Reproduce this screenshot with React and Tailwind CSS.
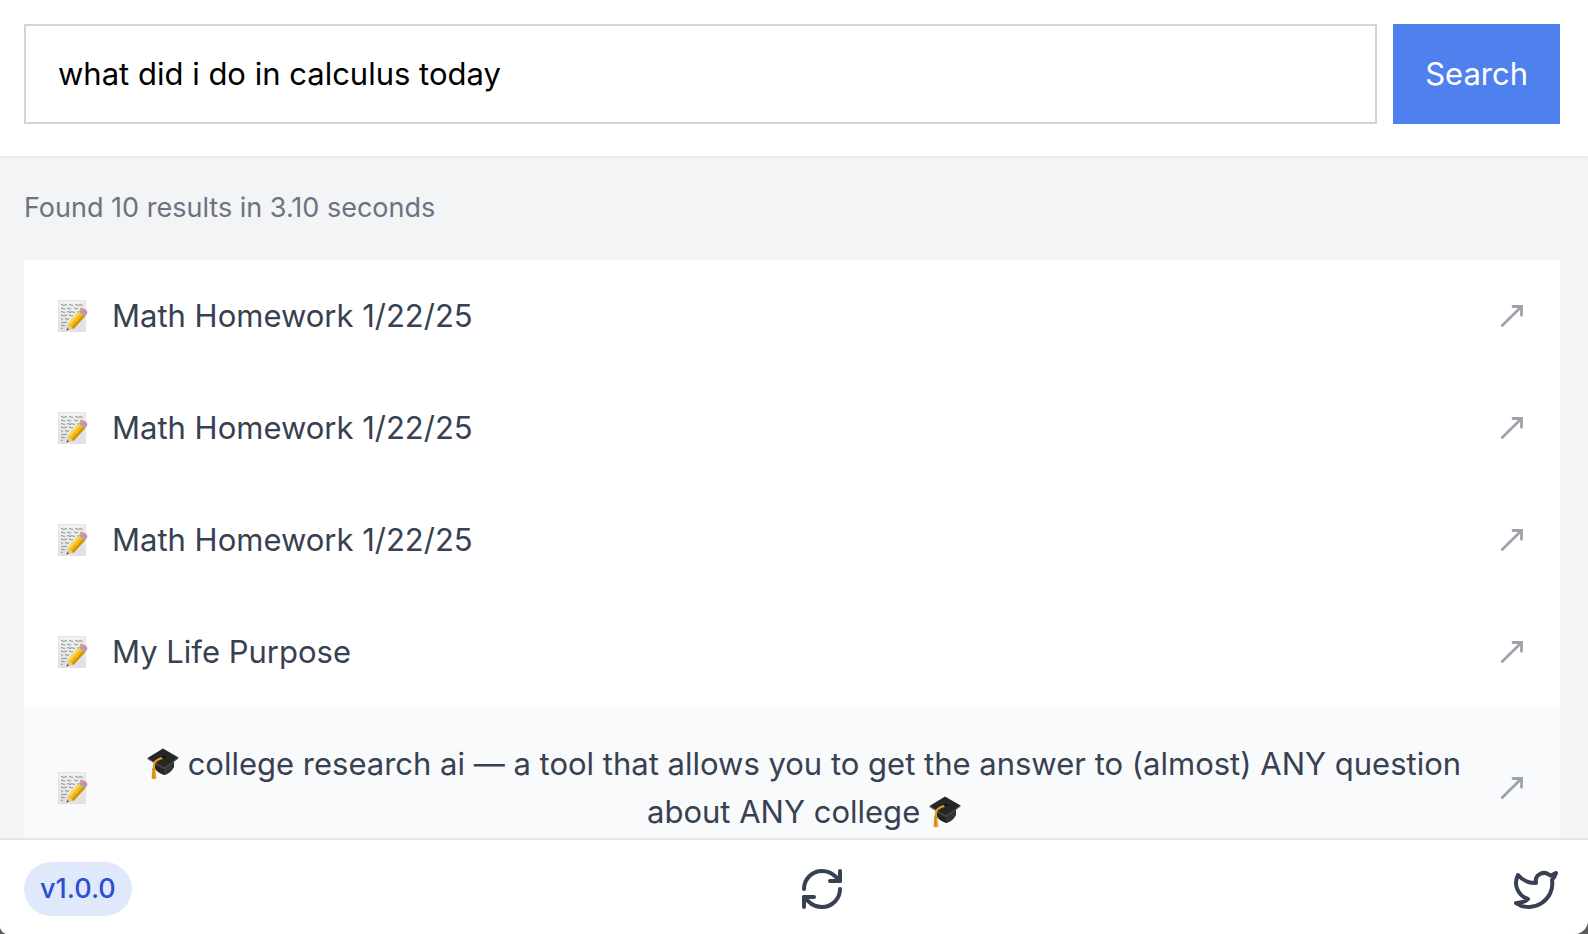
import React from 'react';
import { RefreshCw, Twitter } from 'lucide-react';

const results = [
  { id: 1, title: 'Math Homework 1/22/25' },
  { id: 2, title: 'Math Homework 1/22/25' },
  { id: 3, title: 'Math Homework 1/22/25' },
  { id: 4, title: 'My Life Purpose' },
  {
    id: 5,
    title: 'college research ai — a tool that allows you to get the answer to (almost) ANY question about ANY college',
    cap: true,
    active: true
  }
];

const MemoIcon = () => (
  <svg className="w-8 h-8 shrink-0" viewBox="0 0 32 32" fill="none" aria-hidden="true">
    <defs>
      <linearGradient id="paper" x1="0" y1="0" x2="0" y2="1">
        <stop offset="0" stopColor="#f1f1f1" />
        <stop offset="1" stopColor="#e0e0e0" />
      </linearGradient>
    </defs>
    <rect x="2.5" y="0.5" width="27" height="31" fill="url(#paper)" stroke="#dadada" strokeWidth="0.6" />
    <g stroke="#8f8f93" strokeWidth="1">
      <path d="M5 5q1-1 2 0t2 0 2 0M13 5q1-1 2 0t2 0M19 5q1-1 2 0t2 0 2 0 2 0" />
      <path d="M5 8.500q1-1 2 0t2 0M11 8.500q1-1 2 0t2 0M18 8.500q1-1 2 0t2 0M24 8.500h2" />
      <path d="M5 12q1-1 2 0t2 0M11 12q1-1 2 0t2 0 2 0 2 0M21 12h2" />
      <path d="M5 15.500q1-1 2 0t2 0 2 0M13 15.500q1-1 2 0t2 0" />
      <path d="M5 19h2M9 19q1-1 2 0t2 0" />
      <path d="M5 22.500q1-1 2 0t2 0 2 0M5 25.500q1-1 2 0t2 0M5 28.500q1-1 2 0" />
    </g>
    <path d="M10.500 30.500 12 23.500 17.500 28.800Z" fill="#e9c58c" />
    <path d="m10.500 30.500.6-2.600 1.800 1.700Z" fill="#4a4038" />
    <path d="M11.800 24 23 11.500 28.800 16.700 17.500 29Z" fill="#f4b916" />
    <path d="M11.800 24 23 11.500 24.700 13 13.500 25.600Z" fill="#fbd84a" />
    <path d="M15.700 27.300 27 15 28.800 16.700 17.500 29Z" fill="#d39112" />
    <path d="m22.900 11.600 2-2.200 5.700 5.100-1.900 2.200Z" fill="#9aa5ac" />
    <path d="M24.900 9.400c1.300-1.300 3.400-1 5 .4s2 3.400.7 4.700Z" fill="#ea7f8c" />
  </svg>
);

const CapIcon = () => (
  <svg
    className="inline-block w-8 h-8 align-[-5px]"
    viewBox="0 0 32 32"
    fill="none"
    role="img"
    aria-label="graduation cap"
  >
    <path d="M8 14v7c2 3 6 5 9 6 4-1 8-4 10-8v-6Z" fill="#242424" />
    <path d="M17 20.500v6.500c4-1 8-4 9.500-8v-4.500Z" fill="#343434" />
    <path d="M16 .5 31.500 9.500 17 20.500.500 10Z" fill="#262626" />
    <path d="M.5 10 17 19.400 31.500 9.500v1L17 21.300.500 11Z" fill="#4d4d4d" />
    <path d="M16.500 9.500C13 10.500 9.500 12 7.500 14.500L6.600 21" stroke="#e29a20" strokeWidth="2.200" strokeLinecap="round" />
    <ellipse cx="16.800" cy="9.300" rx="2.200" ry="1.400" fill="#111" />
    <path d="M5.400 20h2.800l1.300 10.500c-1.200 1-4 1-5 0Z" fill="#e8a02a" />
    <path d="M6.500 22.500 6 30.500M5.200 21.500h3.200" stroke="#b97412" strokeWidth="0.800" />
  </svg>
);

const ArrowIcon = () => (
  <svg className="w-8 h-8 shrink-0 text-[#9ca3af]" viewBox="0 0 32 32" fill="none" stroke="currentColor" strokeWidth="2.800" aria-hidden="true">
    <path d="M6.300 25.500 25 7" strokeLinecap="round" />
    <path d="M17 6.500h8.500v8.800" strokeLinecap="round" />
  </svg>
);

const App = () => {
  return (
    <div className="h-screen bg-[#5c5c5c]">
      <div className="flex flex-col h-full overflow-hidden rounded-bl-[8px] rounded-br-[14px] bg-[#f3f4f6] font-['Inter',sans-serif]">
        <header className="relative bg-white pt-6 pb-8 pl-6 pr-7 shadow-[0_2px_4px_rgba(0,0,0,0.05)]">
          <form className="flex gap-4" onSubmit={(e) => e.preventDefault()}>
            <input
              type="text"
              aria-label="Search"
              defaultValue="what did i do in calculus today"
              className="flex-1 min-w-0 px-8 py-6 border-2 border-[#d1d5db] bg-white text-[31px] leading-[48px] text-black outline-none"
            />
            <button type="submit" className="px-8 bg-[#4f81ee] text-[31px] leading-[48px] text-white">
              Search
            </button>
          </form>
        </header>

        <main className="flex-1 min-h-0 overflow-hidden pt-8 pl-6 pr-7">
          <p className="mb-8 text-[27px] leading-10 text-[#6b7280]">Found 10 results in 3.10 seconds</p>
          <ul className="bg-white">
            {results.map((result) => (
              <li key={result.id}>
                <button
                  type="button"
                  className={`flex items-center w-full px-8 py-8 text-[31px] leading-[48px] text-[#374151] ${
                    result.active ? 'bg-[#f9fafb] text-center' : 'text-left'
                  }`}
                >
                  <MemoIcon />
                  <span className="flex-1 ml-6">
                    {result.cap && <><CapIcon />{' '}</>}
                    {result.title}
                    {result.cap && <>{' '}<CapIcon /></>}
                  </span>
                  <ArrowIcon />
                </button>
              </li>
            ))}
          </ul>
        </main>

        <footer className="flex items-center justify-between bg-white border-t-2 border-[#e5e7eb] pt-[22px] pb-[18px] pl-6 pr-7">
          <span className="px-4 py-[7px] rounded-full bg-[#dfe9fb] text-[27px] leading-10 font-medium text-[#2a4fd0]">v1.0.0</span>
          <button type="button" aria-label="Refresh" className="text-[#374151]">
            <RefreshCw size={48} />
          </button>
          <a href="#twitter" aria-label="Twitter" className="text-[#374151]">
            <Twitter size={48} />
          </a>
        </footer>
      </div>
    </div>
  );
};

export default App;
